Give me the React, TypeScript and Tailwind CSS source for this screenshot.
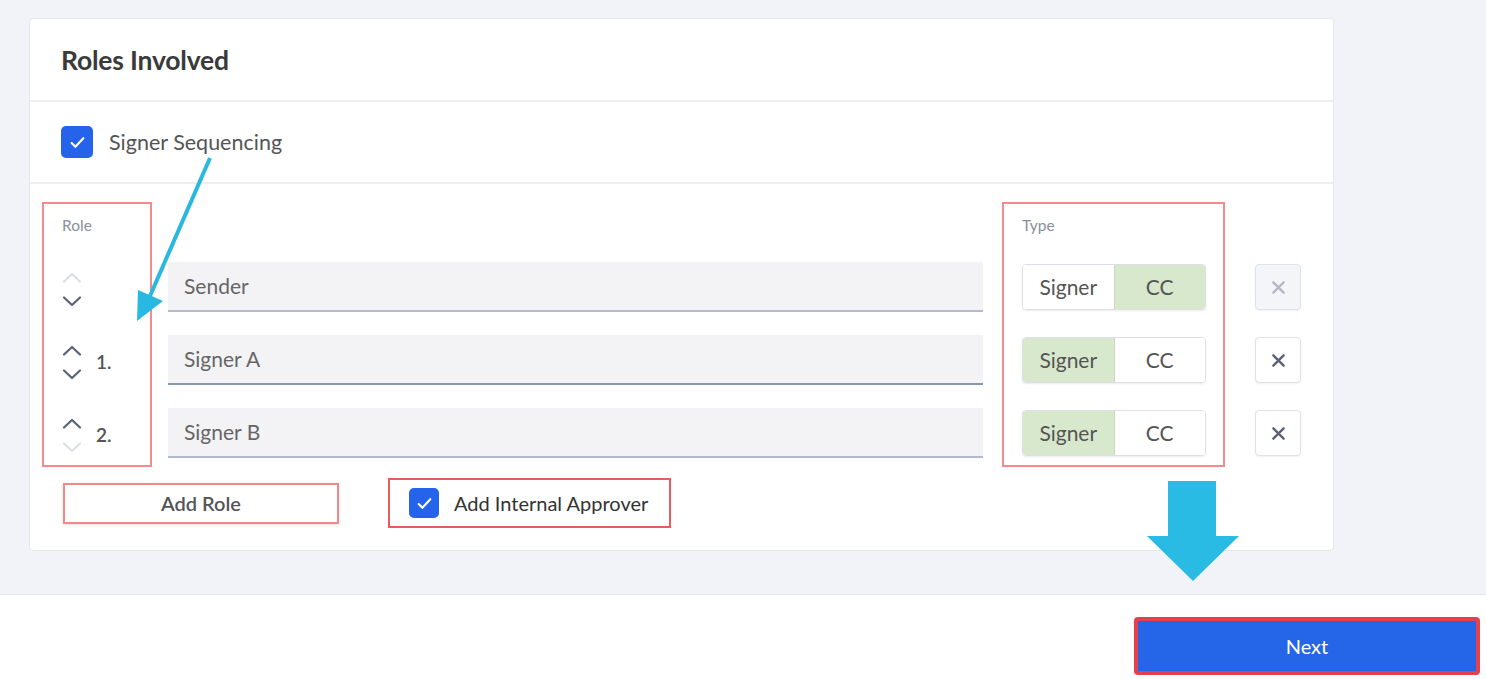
import React, { useState } from 'react';

type RoleType = 'Signer' | 'CC';

interface Role {
  id: string;
  name: string;
  type: RoleType;
  order: string;
  canUp: boolean;
  canDown: boolean;
  removable: boolean;
}

const ROLES: Role[] = [
  { id: 'sender', name: 'Sender', type: 'CC', order: '', canUp: false, canDown: true, removable: false },
  { id: 'a', name: 'Signer A', type: 'Signer', order: '1.', canUp: true, canDown: true, removable: true },
  { id: 'b', name: 'Signer B', type: 'Signer', order: '2.', canUp: true, canDown: false, removable: true },
];

const font = { fontFamily: 'Lato, "Noto Sans", sans-serif' };

const Check = () => (
  <svg viewBox="0 0 16 16" className="h-[17px] w-[17px]" fill="none" stroke="white" strokeWidth={2} strokeLinecap="round" strokeLinejoin="round">
    <path d="M2.5 8.5l3.5 3.5L13.5 4" />
  </svg>
);

const Chevron: React.FC<{ up?: boolean; active: boolean }> = ({ up, active }) => (
  <svg viewBox="0 0 20 11" className="h-[11px] w-[20px]" fill="none" stroke={active ? '#59627a' : '#dcdfe6'} strokeWidth={2.2} strokeLinecap="round" strokeLinejoin="round">
    <path d={up ? 'M2 9.5L10 2l8 7.5' : 'M2 1.5L10 9l8-7.5'} />
  </svg>
);

const XIcon: React.FC<{ muted: boolean }> = ({ muted }) => (
  <svg viewBox="0 0 16 16" className="h-[15px] w-[15px]" fill="none" stroke={muted ? '#b4b9c6' : '#5a6178'} strokeWidth={2.5} strokeLinecap="round">
    <path d="M2.5 2.5l11 11M13.5 2.5l-11 11" />
  </svg>
);

const App: React.FC = () => {
  const [roles, setRoles] = useState<Role[]>(ROLES);
  const [sequencing, setSequencing] = useState(true);
  const [approver, setApprover] = useState(true);

  const setType = (id: string, type: RoleType) =>
    setRoles(prev => prev.map(r => (r.id === id ? { ...r, type } : r)));

  return (
    <div className="relative flex h-[679px] w-full flex-col overflow-hidden bg-[#f1f3f8]" style={font}>
      <div className="px-[29px] pt-[18px]">
        <div className="w-[1305px] rounded-[4px] border border-[#e4e7ef] bg-white">
          {/* header */}
          <div className="flex h-[83px] items-center border-b-2 border-[#eceef4] px-[31px]">
            <h1 className="pt-[2px] text-[26.5px] font-bold tracking-[-0.2px] text-[#3a3a3a]">Roles Involved</h1>
          </div>

          {/* sequencing */}
          <div className="flex h-[82px] items-center gap-[16px] border-b-2 border-[#eceef4] px-[31px]">
            <button
              onClick={() => setSequencing(s => !s)}
              className={`flex h-[32px] w-[32px] items-center justify-center rounded-[5px] ${sequencing ? 'bg-[#2563eb]' : 'border border-gray-300 bg-white'}`}
            >
              {sequencing && <Check />}
            </button>
            <span className="text-[21.5px] text-[#555]">Signer Sequencing</span>
          </div>

          {/* roles table */}
          <div className="px-[12px] pb-[22px] pt-[18px]">
            <div className="flex items-start">
              {/* role column */}
              <div className="w-[110px] border-2 border-[#f28b8b] pb-[7px] pl-[18px]">
                <div className="h-[58px] pt-[10px] text-[15.5px] text-[#8a8f9c]">Role</div>
                <div className="flex flex-col gap-[23px]">
                  {roles.map(r => (
                    <div key={r.id} className="flex h-[50px] items-center gap-[14px] pt-[5px]">
                      <div className="flex flex-col items-center gap-[13px]">
                        <Chevron up active={r.canUp} />
                        <Chevron active={r.canDown} />
                      </div>
                      <span className="text-[19px] font-semibold text-[#555]">{r.order}</span>
                    </div>
                  ))}
                </div>
              </div>

              {/* names */}
              <div className="ml-[16px] w-[815px] pt-[60px]">
                <div className="flex flex-col gap-[23px]">
                  {roles.map((r, i) => (
                    <div
                      key={r.id}
                      className={`flex h-[50px] items-center border-b-2 bg-[#f3f3f5] px-[16px] text-[21px] text-[#666] ${i === 1 ? 'border-[#8a94b4]' : 'border-[#b3bace]'}`}
                    >
                      {r.name}
                    </div>
                  ))}
                </div>
              </div>

              {/* type column */}
              <div className="ml-[19px] w-[223px] border-2 border-[#f28b8b] pb-[7px] pl-[18px]">
                <div className="h-[58px] pt-[10px] text-[15.5px] text-[#8a8f9c]">Type</div>
                <div className="flex flex-col gap-[23px]">
                  {roles.map(r => (
                    <div key={r.id} className="flex h-[50px] items-center">
                      <div className="flex h-[46px] w-[184px] overflow-hidden rounded-[4px] border border-[#dcdfe6] shadow-[0_1px_2px_rgba(0,0,0,0.08)]">
                        {(['Signer', 'CC'] as RoleType[]).map(t => (
                          <button
                            key={t}
                            onClick={() => setType(r.id, t)}
                            className={`flex-1 text-[21px] text-[#555] ${r.type === t ? 'bg-[#d7e8cd]' : 'bg-white'} ${t === 'CC' ? 'border-l border-[#c9d9bf]' : ''}`}
                          >
                            {t}
                          </button>
                        ))}
                      </div>
                    </div>
                  ))}
                </div>
              </div>

              {/* remove column */}
              <div className="ml-[30px] pt-[60px]">
                <div className="flex flex-col gap-[23px]">
                  {roles.map(r => (
                    <div key={r.id} className="flex h-[50px] items-center">
                      <button
                        disabled={!r.removable}
                        className={`flex h-[46px] w-[46px] items-center justify-center rounded-[4px] border border-[#dfe2ea] shadow-[0_1px_2px_rgba(0,0,0,0.06)] ${r.removable ? 'bg-white' : 'bg-[#f4f5f9]'}`}
                      >
                        <XIcon muted={!r.removable} />
                      </button>
                    </div>
                  ))}
                </div>
              </div>
            </div>

            {/* add row */}
            <div className="mt-[11px] flex items-center">
              <button className="ml-[21px] h-[41px] w-[276px] border-2 border-[#f08a8a] bg-white text-[20px] font-semibold text-[#555] shadow-[0_1px_3px_rgba(0,0,0,0.12)]">
                Add Role
              </button>
              <div className="ml-[49px] flex h-[50px] w-[283px] items-center gap-[15px] border-2 border-[#e85c5c] pl-[19px]">
                <button
                  onClick={() => setApprover(a => !a)}
                  className={`flex h-[30px] w-[30px] items-center justify-center rounded-[5px] ${approver ? 'bg-[#2563eb]' : 'border border-gray-300 bg-white'}`}
                >
                  {approver && <Check />}
                </button>
                <span className="text-[20px] text-[#333]">Add Internal Approver</span>
              </div>
            </div>
          </div>
        </div>
      </div>

      <div className="flex-1" />

      {/* footer */}
      <div className="flex h-[85px] items-start justify-end border-t border-[#e4e7ef] bg-white pr-[6px] pt-[22px]">
        <button className="h-[58px] w-[346px] rounded-[4px] border-4 border-[#e8404a] bg-[#2566e8] text-[20px] text-white">
          Next
        </button>
      </div>

      {/* annotation arrows */}
      <svg className="pointer-events-none absolute left-0 top-0 h-[679px] w-[1486px]" viewBox="0 0 1486 679">
        <line x1="210" y1="158" x2="150" y2="296" stroke="#29b8e2" strokeWidth="4" />
        <polygon points="137,321 138,290 163,301" fill="#29b8e2" />
        <polygon points="1168,481 1216,481 1216,536 1239,536 1193,581 1147,536 1168,536" fill="#29bbe3" />
      </svg>
    </div>
  );
};

export default App;
